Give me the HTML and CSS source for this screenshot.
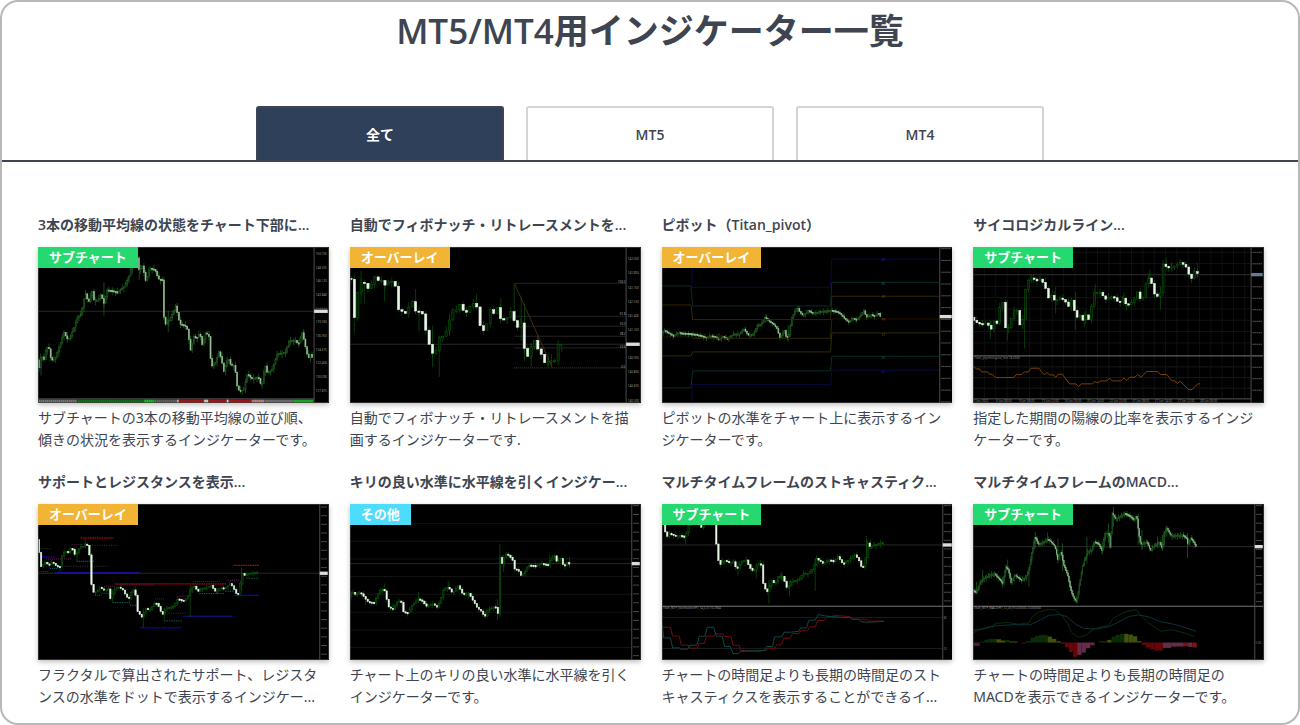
FILE: index.html
```html
<!DOCTYPE html>
<html lang="ja">

<head>
  <meta charset="UTF-8" />
  <meta name="viewport" content="width=device-width, initial-scale=1.0" />
  <title>MT5/MT4用インジケーター一覧</title>
  <link rel="stylesheet" href="styles.css">
</head>

<body>
  <main class="page">
    <h1><span class="en">MT5/MT4</span>用インジケーター一覧</h1>

    <div class="tab-nav">
      <button class="tab active" type="button">全て</button>
      <button class="tab" type="button"><span class="en">MT5</span></button>
      <button class="tab" type="button"><span class="en">MT4</span></button>
    </div>

    <div class="list">
      <article class="item">
        <h2><span class="en">3</span>本の移動平均線の状態をチャート下部に<span class="en">...</span></h2>
        <div class="thumb">
          <svg class="chart" data-chart="ma" viewBox="24 109 873 468"></svg>
          <span class="badge sub">サブチャート</span>
        </div>
        <p>サブチャートの3本の移動平均線の並び順、傾きの状況を表示するインジケーターです。</p>
      </article>
      <article class="item">
        <h2>自動でフィボナッチ・リトレースメントを<span class="en">...</span></h2>
        <div class="thumb">
          <svg class="chart" data-chart="fibo" viewBox="24 109 873 468"></svg>
          <span class="badge overlay">オーバーレイ</span>
        </div>
        <p>自動でフィボナッチ・リトレースメントを描画するインジケーターです.</p>
      </article>
      <article class="item">
        <h2>ピボット（<span class="en">Titan_pivot</span>）</h2>
        <div class="thumb">
          <svg class="chart" data-chart="pivot" viewBox="24 109 873 468"></svg>
          <span class="badge overlay">オーバーレイ</span>
        </div>
        <p>ピボットの水準をチャート上に表示するインジケーターです。</p>
      </article>
      <article class="item">
        <h2>サイコロジカルライン<span class="en">...</span></h2>
        <div class="thumb">
          <svg class="chart" data-chart="psycho" viewBox="24 109 873 468"></svg>
          <span class="badge sub">サブチャート</span>
        </div>
        <p>指定した期間の陽線の比率を表示するインジケーターです。</p>
      </article>
      <article class="item">
        <h2>サポートとレジスタンスを表示<span class="en">...</span></h2>
        <div class="thumb">
          <svg class="chart" data-chart="fractal" viewBox="24 117 873 468"></svg>
          <span class="badge overlay">オーバーレイ</span>
        </div>
        <p>フラクタルで算出されたサポート、レジスタンスの水準をドットで表示するインジケー...</p>
      </article>
      <article class="item">
        <h2>キリの良い水準に水平線を引くインジケー<span class="en">...</span></h2>
        <div class="thumb">
          <svg class="chart" data-chart="round" viewBox="24 117 873 468"></svg>
          <span class="badge other">その他</span>
        </div>
        <p>チャート上のキリの良い水準に水平線を引くインジケーターです。</p>
      </article>
      <article class="item">
        <h2>マルチタイムフレームのストキャスティク<span class="en">...</span></h2>
        <div class="thumb">
          <svg class="chart" data-chart="stoch" viewBox="24 117 873 468"></svg>
          <span class="badge sub">サブチャート</span>
        </div>
        <p>チャートの時間足よりも長期の時間足のストキャスティクスを表示することができるイ...</p>
      </article>
      <article class="item">
        <h2>マルチタイムフレームの<span class="en">MACD...</span></h2>
        <div class="thumb">
          <svg class="chart" data-chart="macd" viewBox="24 117 873 468"></svg>
          <span class="badge sub">サブチャート</span>
        </div>
        <p>チャートの時間足よりも長期の時間足のMACDを表示できるインジケーターです。</p>
      </article>
    </div>
  </main>

  <script src="charts.js"></script>
</body>

</html>
```

FILE: styles.css
```css
* {
  margin: 0;
  padding: 0;
  box-sizing: border-box;
}

body {
  font-family: "Noto Sans", "Noto Sans CJK JP", sans-serif;
  font-size: 14px;
  color: #3e4551;
  background: #fff;
}

.page {
  min-height: 100vh;
  border: 2px solid #b8b8b8;
  border-radius: 18px;
  overflow: hidden;
}

h1 {
  padding-top: 4px;
  font-size: 35px;
  line-height: 50px;
  text-align: center;
}

.en {
  font-family: "Open Sans", sans-serif;
  font-weight: 600;
}

.tab-nav {
  display: flex;
  justify-content: center;
  gap: 22px;
  margin-top: 50px;
  padding: 0 254px;
  border-bottom: 2px solid #3e4551;
}

.tab {
  flex: 1;
  height: 54px;
  border: 2px solid #d4d4d4;
  border-bottom: 0;
  border-radius: 3px 3px 0 0;
  background: #fff;
  color: #3e4551;
  font-family: inherit;
  font-size: 14px;
  font-weight: bold;
  cursor: pointer;
}

.tab.active {
  border-color: #3e4551;
  background: #2f405b;
  color: #fff;
}

.list {
  display: grid;
  grid-template-columns: repeat(4, 1fr);
  gap: 20px 21px;
  padding: 52px 34px 12px 36px;
}

.item h2 {
  height: 22px;
  margin-bottom: 11px;
  font-size: 14px;
  line-height: 22px;
  white-space: nowrap;
}

.item p {
  padding: 4px 8px 0 0;
  line-height: 22px;
}

.thumb {
  position: relative;
  box-shadow: 0 2px 5px rgba(0, 0, 0, 0.25);
}

.chart {
  display: block;
  width: 100%;
  background: #000;
}

.badge {
  position: absolute;
  top: 0;
  left: 0;
  padding: 0 11px;
  color: #fff;
  font-size: 13px;
  font-weight: bold;
  line-height: 21px;
}

.badge.sub {
  background: #25d970;
}

.badge.overlay {
  background: #f1b434;
}

.badge.other {
  background: #4ddcfc;
}
```

FILE: charts.js
```js
// candles: price path, step: distance between candles, wicks: [x, top, bottom]
const charts = {
  ma: {
    top: 109, axis: 853, step: 5, price: 302, noise: 12, soft: true,
    path: [24,445, 29,475, 36,430, 44,450, 52,408, 60,415, 66,450, 78,445, 90,410, 104,365, 114,385, 122,382, 135,350, 146,318, 157,310, 163,270, 170,248, 178,278, 189,240, 194,268, 207,268, 216,250, 224,280, 234,238, 248,240, 265,245, 285,228, 297,205, 308,165, 318,150, 326,140, 330,182, 340,165, 350,212, 362,172, 378,178, 388,205, 400,208, 403,310, 408,342, 420,330, 430,310, 440,285, 452,340, 468,345, 477,360, 483,425, 494,378, 505,382, 512,365, 520,405, 530,365, 541,380, 546,470, 560,455, 570,422, 578,450, 585,485, 597,440, 606,465, 618,465, 622,520, 632,545, 645,535, 655,490, 668,505, 688,500, 698,530, 708,460, 714,485, 728,480, 745,430, 770,425, 780,390, 800,390, 808,402, 820,365, 832,420, 838,445, 845,430, 850,442],
    wicks: [[33,460,495],[222,215,315],[328,138,208],[415,300,365],[820,360,390]],
    labels: ['150.705','148.355','146.120','143.840','','139.360','136.950','134.675','132.400','130.090','127.815'],
    labelTop: 129, labelGap: 41
  },
  fibo: {
    top: 109, axis: 853, step: 10.2, price: 401, noise: 14,
    path: [24,203, 33,206, 38,321, 43,321, 48,262, 60,215, 72,215, 79,238, 92,225, 103,198, 112,213, 121,195, 128,230, 142,215, 155,212, 167,230, 170,295, 185,302, 193,312, 203,297, 213,266, 228,307, 244,298, 253,345, 264,388, 272,427, 285,430, 295,383, 313,375, 325,340, 335,298, 350,298, 358,280, 372,305, 382,305, 393,277, 405,280, 410,290, 416,340, 431,362, 442,335, 450,297, 462,310, 473,286, 480,324, 498,329, 510,300, 520,320, 527,362, 541,328, 548,386, 558,450, 572,410, 584,387, 594,418, 606,435, 611,457, 624,453, 645,450, 652,402, 662,401],
    wicks: [[37,205,366],[57,180,280],[67,210,280],[128,215,272],[221,235,310],[231,305,362],[272,345,470],[292,375,499],[323,310,375],[404,250,290],[477,262,330],[517,219,322],[538,258,390],[548,280,450],[568,400,468],[588,372,420],[619,430,470],[629,430,470],[660,400,425]],
    lines: [[518,218,853,'#444','3 3'],[518,317,853,'#444','3 3'],[518,347,853,'#444','3 3'],[518,377,853,'#444','3 3'],[518,412,853,'#444','3 3'],[516,472,853,'#444','3 3']],
    curves: [['#462912',[518,219,632,472]]],
    tags: [[829,217,'100.0','#aaa'],[834,314,'61.8','#aaa'],[834,344,'50.0','#aaa'],[834,374,'38.2','#aaa'],[834,411,'23.6','#aaa'],[838,471,'0.0','#aaa']],
    labels: ['142.000','141.850','141.700','141.550','141.400','141.250','','140.950','140.800','140.650','140.500'],
    labelTop: 145, labelGap: 42.4
  },
  pivot: {
    top: 109, axis: 858, step: 4.5, price: 318, noise: 8, soft: true, noPriceLine: true,
    path: [24,368, 34,360, 48,368, 60,376, 75,366, 95,368, 120,370, 140,374, 160,382, 170,375, 185,378, 196,386, 210,378, 225,385, 240,370, 260,370, 272,355, 285,374, 302,370, 312,345, 325,340, 335,320, 348,332, 360,340, 372,355, 380,382, 394,360, 400,385, 408,370, 415,325, 424,305, 432,290, 440,305, 450,315, 465,300, 480,308, 505,302, 535,299, 550,302, 562,310, 575,325, 588,335, 598,322, 610,328, 622,315, 632,300, 640,320, 655,312, 665,318, 675,305, 682,318],
    wicks: [[195,368,392],[403,345,393],[432,284,305],[336,312,335]],
    lines: [[24,379,115,'#332500','3 2'],[533,325,856,'#331d00','4 2']],
    curves: [
      ['#09093a',[114,172,114,230,530,230,534,145,856,145]],
      ['#082b2c',[24,226,111,226,116,286,530,286,534,215,856,215]],
      ['#302600',[24,283,111,283,116,327,530,327,534,257,856,257]],
      ['#302600',[114,383,530,383,534,325]],
      ['#302c00',[24,436,111,436,116,424,530,424,534,367,856,367]],
      ['#082b2c',[24,532,111,532,116,481,530,481,534,437,856,437]],
      ['#09093a',[114,576,114,522,530,522,534,479,856,479]]
    ],
    tags: [[684,152,'R3','#1c20b0'],[684,222,'R2','#197474'],[684,263,'R1','#8a4a09'],[684,332,'PP','#8a4a09'],[684,375,'S1','#8a5a09'],[684,445,'S2','#197474'],[684,486,'S3','#1c20b0']],
    labelTop: 114, labelGap: 35.4, labels: 14
  },
  psycho: {
    top: 109, axis: 859, step: 8.6, price: 192, noise: 13, grid: true, split: 436, blue: true,
    path: [24,320, 36,335, 56,341, 72,335, 80,366, 90,330, 102,340, 110,280, 122,272, 127,374, 138,340, 150,300, 166,300, 171,374, 181,300, 188,214, 202,205, 208,192, 215,216, 228,204, 240,218, 249,240, 256,266, 266,250, 273,271, 290,262, 305,272, 317,290, 328,255, 334,318, 342,320, 352,312, 360,334, 367,312, 378,332, 387,264, 393,245, 412,245, 425,267, 440,257, 454,262, 466,278, 478,262, 490,285, 510,272, 524,238, 532,272, 544,250, 547,220, 557,200, 564,217, 573,250, 588,262, 595,215, 596,158, 610,170, 630,168, 650,156, 666,165, 676,190, 686,205, 692,182, 706,191],
    wicks: [[76,330,384],[127,270,390],[179,290,414],[205,190,218],[272,230,308],[332,245,358],[358,305,350],[391,220,270],[477,245,282],[485,260,300],[555,176,220],[587,228,296],[604,140,180],[621,155,185],[680,190,218],[698,158,200]],
    curves: [['#784006',[24,466,34,475,44,475,50,484,68,484,74,491,82,491,92,501,146,501,154,492,170,492,178,484,190,484,198,473,222,473,230,484,238,493,246,486,254,493,266,493,272,501,280,491,292,491,314,520,333,520,341,528,350,520,382,520,390,513,398,517,408,511,426,511,434,503,442,511,468,511,477,502,485,510,495,500,510,500,519,492,528,500,546,483,579,483,587,492,606,492,621,511,630,511,638,519,646,512,671,537,682,537,698,520,706,520]]],
    tags: [[28,446,'Titan_psychological_line 78.0000','#888'],[26,574,'2 Jun 2023','#888'],[94,574,'6 Jun 08:00','#888'],[162,574,'9 Jun 08:00','#888'],[230,574,'13 Jun 22:00','#888'],[298,574,'16 Jun 00:00','#888'],[366,574,'20 Jun 14:00','#888'],[434,574,'22 Jun 22:00','#888'],[502,574,'27 Jun 08:00','#888'],[570,574,'27 Jun 14:00','#888'],[638,574,'27 Jun 22:00','#888'],[706,574,'28 Jun 06:00','#888']],
    labelTop: 125, labelGap: 34.5, labels: 13
  },
  fractal: {
    top: 117, axis: 870, step: 6.3, price: 325, noise: 7,
    path: [24,224, 30,262, 35,307, 48,292, 60,300, 70,290, 80,302, 94,307, 100,270, 108,258, 118,262, 128,246, 138,270, 146,262, 152,245, 166,244, 172,230, 181,262, 185,350, 194,382, 205,380, 212,366, 222,374, 238,372, 244,402, 256,375, 267,365, 282,375, 292,394, 300,402, 310,375, 318,375, 326,440, 340,458, 350,430, 362,436, 380,410, 392,430, 400,452, 410,430, 435,425, 445,402, 465,408, 475,396, 480,390, 487,368, 495,362, 508,380, 520,370, 535,368, 545,360, 562,382, 575,368, 588,370, 605,355, 613,368, 625,390, 634,385, 636,322, 648,332, 660,325, 685,322],
    wicks: [[90,300,322],[141,258,288],[166,222,245],[181,240,290],[248,375,412],[298,390,420],[316,365,390],[340,430,489],[403,430,468],[481,360,456],[635,308,375]],
    lines: [[152,219,252,'#d80a13','5 2'],[255,357,590,'#d80a13','5 2'],[612,301,687,'#e00915','5 2'],[34,276,74,'#1010d8','5 2'],[75,323,330,'#1212f0','5 1'],[330,489,457,'#1212e8','5 2'],[459,454,610,'#1212f0','5 1'],[612,391,687,'#1212f0','5 1'],[48,282,125,'#6a1857','3 3'],[140,289,194,'#0a655a','4 2'],[60,311,85,'#0a655a','3 3'],[34,320,55,'#0a655a','3 3'],[195,391,214,'#0a655a','3 3'],[215,385,240,'#0a655a','3 3'],[248,413,299,'#0a655a','4 3'],[300,421,320,'#0a655a','4 3'],[403,468,457,'#0a655a','4 3'],[508,386,585,'#0a655a','4 3'],[586,379,612,'#0a655a','4 3'],[650,340,687,'#0a655a','4 3'],[222,364,258,'#6a1857','3 3'],[260,360,372,'#6a1857','3 3'],[375,402,405,'#6a1857','3 3'],[440,394,482,'#6a1857','3 3'],[490,350,570,'#6a1857','3 3'],[594,346,632,'#6a1857','3 3'],[125,239,158,'#6a1857','3 3'],[166,241,265,'#333','3 4'],[94,304,235,'#333','3 4'],[416,445,470,'#333','3 4'],[24,251,66,'#333','3 4']],
    labelTop: 126, labelGap: 26, labels: 18
  },
  round: {
    top: 117, axis: 870, step: 6.3, price: 296, noise: 9,
    path: [24,398, 32,378, 45,390, 58,382, 72,400, 80,410, 100,414, 112,385, 122,372, 134,380, 140,424, 156,434, 165,415, 180,405, 186,440, 200,445, 214,420, 232,402, 244,408, 256,424, 275,416, 290,428, 300,400, 308,375, 322,366, 335,385, 352,362, 367,390, 384,386, 398,410, 410,430, 425,442, 431,460, 440,435, 460,425, 463,410, 468,456, 473,440, 476,270, 482,302, 488,280, 498,265, 515,285, 521,312, 532,315, 540,332, 550,325, 562,300, 585,303, 600,295, 622,300, 632,280, 642,272, 648,290, 662,280, 668,306, 682,290, 686,296],
    wicks: [[71,398,420],[127,355,380],[153,415,438],[230,380,405],[319,348,375],[430,440,462],[467,402,466],[474,237,456],[485,270,320],[624,270,295],[683,276,308]],
    lines: [[24,176,870,'#141414'],[24,229,870,'#141414'],[24,282,870,'#141414'],[24,335,870,'#141414'],[24,388,870,'#141414'],[24,442,870,'#141414'],[24,495,870,'#141414'],[24,548,870,'#141414']],
    labelTop: 122, labelGap: 26.5, labels: 18
  },
  stoch: {
    top: 117, axis: 867, step: 6.4, price: 240, noise: 10, split: 424,
    path: [24,130, 34,165, 38,220, 50,205, 65,212, 86,212, 98,218, 104,185, 115,170, 135,165, 145,188, 155,160, 187,170, 192,275, 202,300, 212,285, 228,292, 245,290, 250,318, 265,290, 280,285, 290,308, 302,320, 315,295, 325,300, 332,365, 345,382, 355,345, 367,358, 375,335, 390,335, 404,375, 412,350, 438,345, 450,325, 468,325, 482,310, 490,280, 510,295, 530,285, 545,290, 553,272, 570,297, 590,285, 605,268, 618,285, 627,308, 637,300, 641,228, 652,247, 665,240, 690,233],
    wicks: [[95,210,238],[252,290,332],[307,300,340],[319,285,310],[345,345,416],[383,320,345],[407,350,394],[484,280,378],[638,213,300],[650,225,252]],
    lines: [[24,458,867,'#1c1c1c'],[24,551,867,'#1c1c1c']],
    curves: [
      ['#720b10',[24,487,49,487,56,514,76,514,82,541,104,541,110,550,130,550,135,536,151,536,157,514,180,514,185,507,206,507,211,515,231,515,237,541,256,541,260,557,310,559,338,556,342,550,363,550,368,540,382,540,389,520,409,520,416,506,436,506,442,496,463,496,467,486,484,486,492,467,510,467,520,457,546,452,588,455,594,463,638,463,646,469,690,469]],
      ['#0b494b',[24,472,29,519,49,519,56,549,76,549,81,553,101,553,107,541,129,541,136,514,153,514,160,487,179,487,187,514,205,514,212,545,229,545,237,566,255,566,260,559,332,557,338,545,356,545,362,516,383,516,391,502,410,502,436,499,440,489,458,489,465,466,484,466,493,449,513,453,566,458,589,458,595,463,614,463,620,470,640,472,690,469]]
    ],
    tags: [[26,433,'Titan_MTF_Stochastics(H1,14,3,3) 73.2964','#999'],[869,461,'80','#777'],[869,554,'20','#777']],
    labelTop: 122, labelGap: 26, labels: 12
  },
  macd: {
    top: 117, axis: 870, step: 3.1, price: 245, noise: 9, split: 424, soft: true,
    path: [24,375, 36,382, 48,350, 62,338, 75,330, 90,326, 103,340, 115,355, 124,305, 132,315, 140,354, 152,330, 170,345, 185,338, 195,305, 205,250, 212,215, 222,238, 240,230, 250,222, 260,230, 272,245, 280,285, 290,260, 298,300, 310,330, 318,370, 328,400, 337,410, 345,360, 355,300, 370,260, 382,255, 390,230, 402,235, 414,258, 422,205, 434,205, 438,250, 444,145, 454,162, 466,155, 482,145, 496,152, 510,165, 517,150, 523,205, 529,240, 548,230, 558,256, 572,240, 586,232, 595,252, 598,210, 607,188, 620,212, 655,210, 668,220, 671,240, 680,218, 695,244],
    wicks: [[35,350,385],[53,315,355],[113,335,368],[128,284,315],[192,315,365],[211,200,250],[248,203,230],[279,220,295],[293,235,318],[334,392,414],[366,215,295],[412,230,268],[431,175,235],[446,126,185],[520,145,240],[531,195,255],[578,215,250],[593,210,258],[606,182,215],[668,205,279]],
    curves: [
      ['#092d0c',[24,504,50,492,76,485,96,475,130,473,160,478,192,474,202,455,220,442,250,434,270,435,290,451,307,474,320,503,342,518,365,510,387,492,405,487,430,482,446,460,475,443,514,433,526,450,548,472,588,499,620,495,647,501,690,515]],
      ['#0b3338',[24,496,57,492,90,483,148,479,195,480,227,465,252,451,284,449,306,455,333,479,356,490,392,493,430,486,460,472,492,455,520,450,553,456,586,470,630,479,666,490,693,499]]
    ],
    bars: [24,543,'#501d38', 44,530,'#0b2b0b', 58,525,'#0b2b0b', 70,522,'#0b2b0b', 94,523,'#42540c', 108,527,'#42540c', 121,525,'#0b2b0b', 133,530,'#42540c', 158,533,'', 171,536,'#670608', 184,528,'#0b2b0b', 197,518,'#0b2b0b', 210,513,'#0b2b0b', 222,510,'#0b2b0b', 248,515,'#42540c', 261,522,'#42540c', 274,529,'#42540c', 287,537,'#670608', 300,547,'#670608', 312,562,'#670608', 325,576,'#670608', 337,570,'#682c4b', 350,563,'#682c4b', 363,550,'#682c4b', 376,541,'#682c4b', 389,533,'', 402,528,'#0b2b0b', 427,525,'#42540c', 440,515,'#0b2b0b', 452,510,'#0b2b0b', 465,507,'#0b2b0b', 478,507,'#42540c', 491,509,'#42540c', 504,514,'#42540c', 517,529,'#42540c', 530,540,'#670608', 543,548,'#670608', 556,553,'#670608', 569,557,'#670608', 594,549,'#682c4b', 619,545,'#682c4b', 657,544,'#7d1018', 670,546,'#682c4b', 683,548,'#7d1018', 696,533,''],
    tags: [[26,432,'Titan_MTF_MACD(H1,12,26,9) 0.00000 -0.000000','#999'],[872,536,'0.00','#777']],
    labelTop: 122, labelGap: 26.2, labels: 12
  }
}

const NS = 'http://www.w3.org/2000/svg'

function add(svg, tag, attrs, text) {
  const el = document.createElementNS(NS, tag)
  for (const key in attrs) el.setAttribute(key, attrs[key])
  if (text) el.textContent = text
  svg.appendChild(el)
}

function hline(svg, x1, y, x2, stroke, dash) {
  add(svg, 'line', { x1, x2, y1: y, y2: y, stroke, 'stroke-width': 3, 'stroke-dasharray': dash || 'none' })
}

// price on the path at x
function at(path, x) {
  for (let i = 2; i < path.length; i += 2) {
    if (x <= path[i]) {
      const t = Math.max(0, (x - path[i - 2]) / (path[i] - path[i - 2]))
      return path[i - 1] + (path[i + 1] - path[i - 1]) * t
    }
  }
  return path[path.length - 1]
}

function drawCandles(svg, c) {
  const w = c.step * 0.66
  const white = c.soft ? '#98c499' : '#e9f8e9'
  const green = c.soft ? '#256b27' : '#0b5a0b'
  c.wicks.forEach(([x, y1, y2]) => {
    add(svg, 'line', { x1: x, x2: x, y1, y2, stroke: green, 'stroke-width': 2 })
  })
  let i = 0
  for (let x = 27; x <= c.path[c.path.length - 2]; x += c.step) {
    const open = at(c.path, x - c.step / 2)
    const close = at(c.path, x + c.step / 2)
    const y = Math.min(open, close)
    const h = Math.max(4, Math.abs(open - close))
    const up = c.noise * (0.5 + 0.5 * Math.sin(i * 2.3))
    const down = c.noise * (0.5 + 0.5 * Math.cos(i * 3.7))
    add(svg, 'line', { x1: x, x2: x, y1: y - up, y2: y + h + down, stroke: green, 'stroke-width': 2 })
    const fall = close > open
    add(svg, 'rect', { x: x - w / 2, y, width: w, height: h, fill: fall ? white : '#031c03', stroke: fall ? white : green, 'stroke-width': 1.5 })
    i++
  }
}

function drawScale(svg, c) {
  add(svg, 'line', { x1: c.axis, x2: c.axis, y1: c.top, y2: c.top + 468, stroke: '#4d4d4d', 'stroke-width': 3 })
  const list = Array.isArray(c.labels) ? c.labels : Array(c.labels).fill('')
  list.forEach((label, i) => {
    const y = c.labelTop + c.labelGap * i
    if (label) {
      add(svg, 'text', { x: c.axis + 5, y: y + 4, fill: '#999', 'font-size': 9 }, label)
    } else {
      hline(svg, c.axis + 4, y, 892, '#555', '5 1')
    }
  })
  add(svg, 'rect', { x: c.axis, y: c.price - 5, width: 894 - c.axis, height: 10, fill: c.blue ? '#65799b' : '#ddd' })
}

document.querySelectorAll('.chart').forEach(svg => {
  const c = charts[svg.dataset.chart]
  if (c.grid) {
    for (let x = 58; x < c.axis; x += 34) add(svg, 'line', { x1: x, x2: x, y1: 109, y2: 565, stroke: '#161616', 'stroke-width': 2 })
    for (let y = 125; y < 430; y += 34) hline(svg, 24, y, c.axis, '#131313')
    hline(svg, 24, 469, c.axis, '#181818')
    hline(svg, 24, 501, c.axis, '#181818')
    hline(svg, 24, 533, c.axis, '#181818')
    hline(svg, 24, 565, c.axis, '#555')
  }
  if (!c.noPriceLine) hline(svg, 24, c.price, c.axis, '#282828')
  ;(c.lines || []).forEach(line => hline(svg, ...line))
  if (c.split) hline(svg, 24, c.split, 895, '#777')
  drawCandles(svg, c)
  ;(c.curves || []).forEach(([stroke, points]) => {
    add(svg, 'polyline', { points: points.join(' '), fill: 'none', stroke, 'stroke-width': 3 })
  })
  for (let i = 0; c.bars && i < c.bars.length - 3; i += 3) {
    const [x, y, fill, next] = [c.bars[i], c.bars[i + 1], c.bars[i + 2], c.bars[i + 3]]
    if (fill) add(svg, 'rect', { x, y: Math.min(y, 533), width: next - x, height: Math.abs(y - 533), fill })
  }
  // trend strip under the moving average chart
  if (svg.dataset.chart === 'ma') {
    const strip = [24,'#777', 142,'#087c12', 342,'#1bc22a', 375,'#666', 440,'#d7a9a9', 448,'#bd1218', 522,'#ddd', 536,'#bd1218', 590,'#ddd', 597,'#bd1218', 665,'#ca8989', 703,'#777', 790,'#17bf28', 851]
    for (let i = 0; i < strip.length - 1; i += 2) {
      add(svg, 'rect', { x: strip[i], y: 567, width: strip[i + 2] - strip[i], height: 10, fill: strip[i + 1] })
    }
    add(svg, 'path', { d: 'M24 572H851', stroke: '#111', 'stroke-opacity': 0.4, 'stroke-width': 10, 'stroke-dasharray': '2 4' })
    hline(svg, 24, 565, 853, '#555')
  }
  ;(c.tags || []).forEach(([x, y, text, fill]) => add(svg, 'text', { x, y, fill, 'font-size': 9 }, text))
  drawScale(svg, c)
  add(svg, 'rect', { x: 25, y: c.top + 1, width: 871, height: 466, fill: 'none', stroke: '#444', 'stroke-width': 2 })
})

// tab切り替え
const nav = document.querySelector('.tab-nav')
nav.addEventListener('click', function (e) {
  const tab = e.target.closest('.tab')
  if (!tab) return
  nav.querySelector('.active').classList.remove('active')
  tab.classList.add('active')
})
```
